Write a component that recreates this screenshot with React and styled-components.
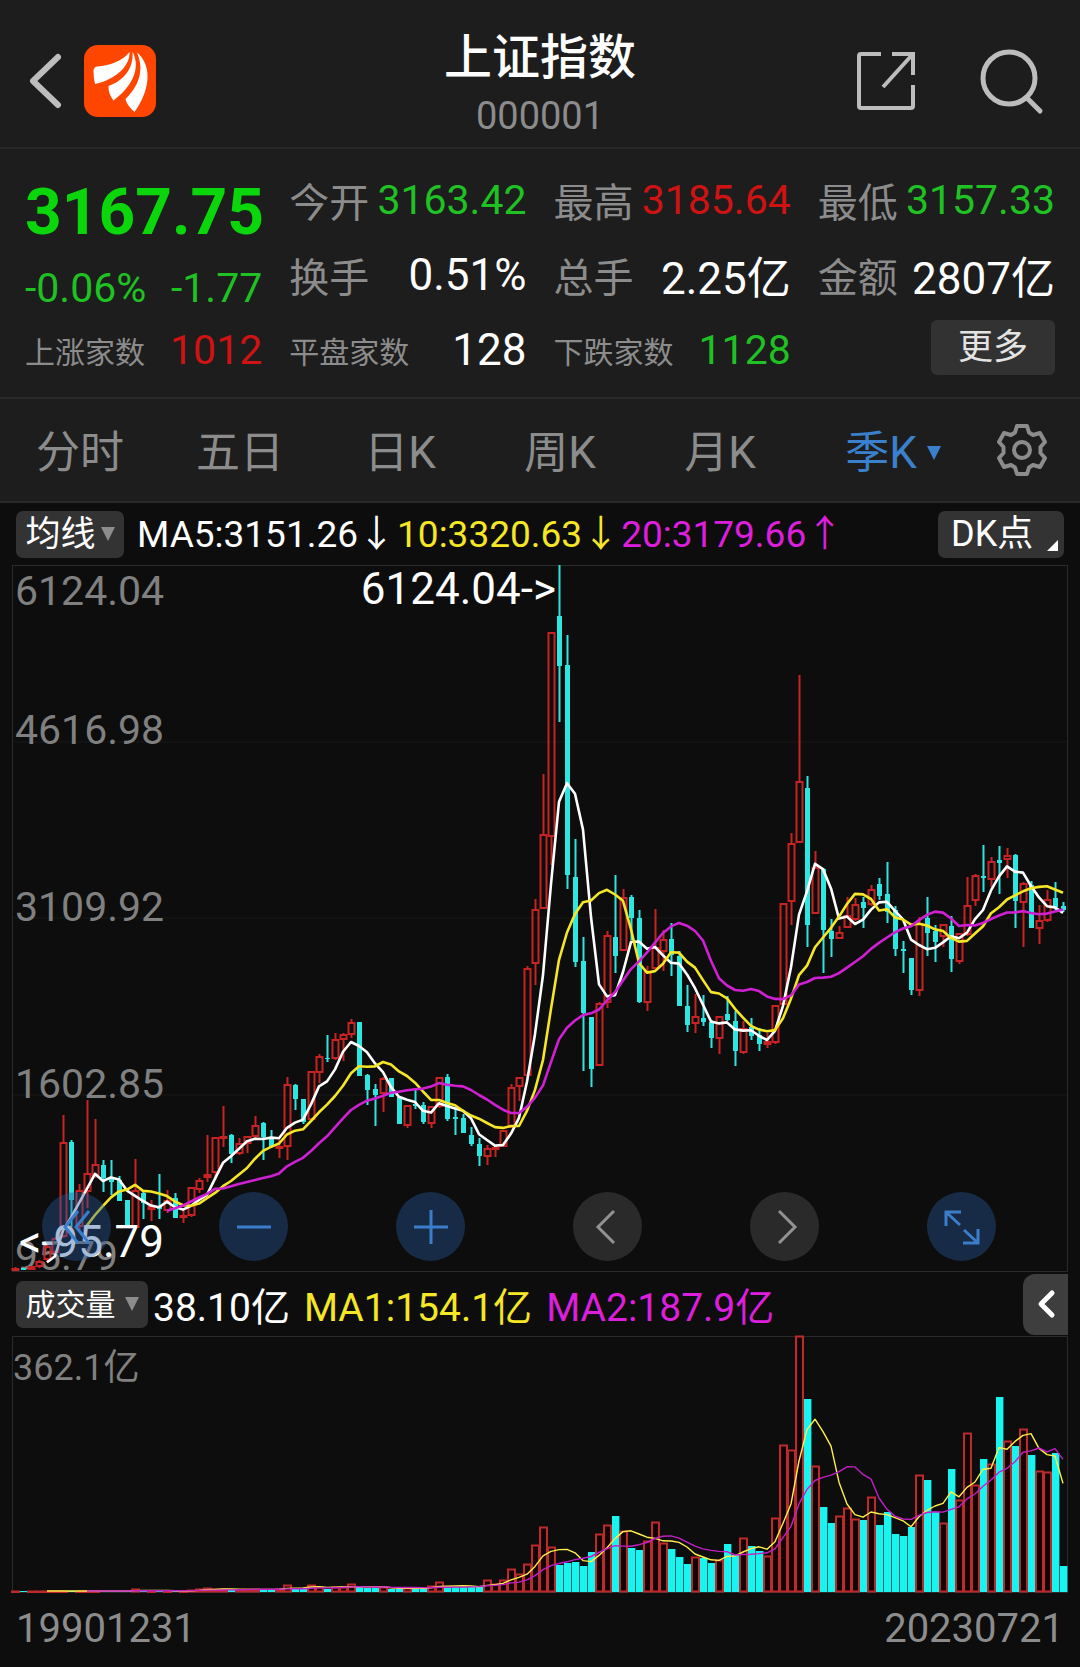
import React from 'react';
import styled, { createGlobalStyle } from 'styled-components';

const GlobalStyle = createGlobalStyle`
  * {
    box-sizing: border-box;
  }

  body {
    margin: 0;
    background: #0d0d0d;
    color: #ffffff;
    font-family: Roboto, 'Noto Sans CJK SC', sans-serif;
  }

  button {
    border: none;
    padding: 0;
    background: none;
    color: inherit;
    font: inherit;
    cursor: pointer;
  }
`;

const COLORS = {
  up: '#c82322',
  down: '#2ce6e2',
  volumeDown: '#18f4ef',
  green: '#1fc123',
  red: '#cf1313',
  white: '#ffffff',
  yellow: '#f5e626',
  magenta: '#dc1fdc',
  label: '#8c8c8c',
};

const Page = styled.main`
  background: #0d0d0d;
`;

const Header = styled.header`
  display: grid;
  grid-template-columns: 1fr auto 1fr;
  align-items: center;
  height: 149px;
  padding: 0 24px;
  background: #1d1d1d;
  border-bottom: 2px solid #292929;
`;

const HeaderSide = styled.div`
  display: flex;
  align-items: center;
  justify-content: ${props => props.$end ? 'flex-end' : 'flex-start'};
  gap: ${props => props.$end ? '63px' : '16px'};
  padding-top: 14px;
  padding-right: ${props => props.$end ? '10px' : '0'};
`;

const IconButton = styled.button`
  display: flex;
  color: #bdbdbd;
`;

const TitleBlock = styled.div`
  padding-top: 20px;
  text-align: center;
`;

const Title = styled.h1`
  margin: 0;
  font-size: 48px;
  font-weight: 500;
  line-height: 64px;
`;

const Code = styled.div`
  font-size: 38px;
  line-height: 52px;
  color: ${COLORS.label};
`;

const Quote = styled.section`
  display: grid;
  grid-template-columns: repeat(4, minmax(0, 1fr));
  column-gap: 27px;
  padding: 13px 25px 10px;
  background: #1d1d1d;
  border-bottom: 2px solid #292929;
`;

const QuoteColumn = styled.div`
  display: flex;
  flex-direction: column;
`;

const Price = styled.div`
  font-size: 64px;
  font-weight: 700;
  line-height: 102px;
  color: #0bd60b;
  white-space: nowrap;
`;

const Change = styled.div`
  display: flex;
  justify-content: space-between;
  font-size: 41px;
  line-height: 48px;
  color: ${COLORS.green};
`;

const StatRow = styled.dl`
  display: flex;
  align-items: center;
  justify-content: space-between;
  height: 75px;
  margin: 0;
  white-space: nowrap;
`;

const StatLabel = styled.dt`
  font-size: ${props => props.$small ? '30px' : '40px'};
  color: ${COLORS.label};
`;

const StatValue = styled.dd`
  margin: 0;
  font-size: ${props => props.$tight ? '41px' : '44px'};
  color: ${props => props.$color};
`;

const MoreButton = styled.button`
  align-self: flex-end;
  width: 124px;
  height: 55px;
  margin-top: 8px;
  border-radius: 6px;
  background: #323232;
  color: #e4e4e4;
  font-size: 35px;
  line-height: 55px;
`;

const Tabs = styled.nav`
  display: grid;
  grid-template-columns: repeat(5, 160fr) 186fr 94fr;
  align-items: center;
  height: 104px;
  background: #1d1d1d;
  border-bottom: 2px solid #292929;
`;

const Tab = styled.button`
  display: flex;
  align-items: center;
  justify-content: center;
  gap: 10px;
  padding-top: 6px;
  font-size: 44px;
  line-height: 64px;
  color: ${props => props.$active ? '#3a80cc' : COLORS.label};
`;

const GearButton = styled(IconButton)`
  padding-left: 8px;
  color: ${COLORS.label};
`;

const Caret = styled.span`
  border-left: 7px solid transparent;
  border-right: 7px solid transparent;
  border-top: 14px solid ${props => props.$color};
`;

const IndicatorRow = styled.div`
  display: flex;
  align-items: center;
  height: ${props => props.$height};
  padding: 0 12px 0 16px;
  white-space: nowrap;
`;

const IndicatorButton = styled.button`
  display: flex;
  align-items: center;
  justify-content: center;
  gap: ${props => props.$gap};
  width: ${props => props.$width};
  height: 47px;
  border-radius: 7px;
  background: #333333;
  font-size: ${props => props.$size};
  line-height: 47px;
`;

const CornerButton = styled(IndicatorButton)`
  position: relative;
  justify-content: flex-start;
  margin-left: auto;
  margin-right: 4px;
  padding-left: 13px;

  &::after {
    content: '';
    position: absolute;
    right: 6px;
    bottom: 7px;
    border-left: 11px solid transparent;
    border-bottom: 11px solid #ffffff;
  }
`;

const Legend = styled.div`
  display: flex;
  gap: ${props => props.$gap};
  margin-left: ${props => props.$left};
  font-size: ${props => props.$size};
`;

const LegendItem = styled.span`
  color: ${props => props.$color};
`;

const Arrow = styled.span`
  font-family: 'Noto Sans CJK SC', sans-serif;
  line-height: 1;
`;

const CollapseButton = styled.button`
  display: flex;
  align-items: center;
  justify-content: center;
  width: 45px;
  height: 61px;
  margin-left: auto;
  border-radius: 12px 0 0 12px;
  background: #3e3e3e;
`;

const ChartArea = styled.div`
  position: relative;
  margin: 0 12px;
`;

const ChartSvg = styled.svg`
  display: block;
  width: 100%;
  height: auto;
  overflow: visible;
`;

const ChartControls = styled.div`
  position: absolute;
  left: 30px;
  right: 72px;
  bottom: 11px;
  display: flex;
  justify-content: space-between;
`;

const RoundButton = styled.button`
  display: flex;
  align-items: center;
  justify-content: center;
  width: 69px;
  height: 69px;
  border-radius: 50%;
  background: ${props => props.$muted ? 'rgba(88, 88, 88, 0.4)' : 'rgba(40, 90, 158, 0.4)'};
  color: ${props => props.$muted ? '#929292' : '#3a7ecb'};
`;

const DateRow = styled.div`
  display: flex;
  justify-content: space-between;
  padding: 2px 16px 4px;
  font-size: 40px;
  line-height: 68px;
  color: ${COLORS.label};
`;

// One entry per quarter: [rising, high, body top, body bottom, low]
const candles = [
  [1, 1267, 1268, 1271, 1271], [0, 1268, 1268, 1270, 1270], [1, 1266, 1266, 1270, 1270],
  [1, 1260, 1261, 1267, 1268], [1, 1245, 1246, 1260, 1262], [1, 1237, 1238, 1253, 1255],
  [1, 1115, 1142, 1237, 1238], [0, 1140, 1142, 1200, 1227], [1, 1184, 1190, 1227, 1230],
  [1, 1100, 1173, 1192, 1208], [1, 1119, 1164, 1176, 1178], [0, 1160, 1165, 1178, 1192],
  [0, 1160, 1178, 1182, 1195], [0, 1176, 1180, 1201, 1201], [0, 1200, 1200, 1228, 1228],
  [1, 1159, 1190, 1228, 1228], [0, 1191, 1193, 1203, 1219], [1, 1200, 1206, 1210, 1221],
  [0, 1174, 1206, 1209, 1219], [1, 1190, 1200, 1211, 1213], [0, 1193, 1198, 1218, 1218],
  [1, 1210, 1215, 1217, 1223], [1, 1187, 1187, 1216, 1217], [1, 1178, 1180, 1190, 1193],
  [1, 1135, 1174, 1178, 1182], [1, 1137, 1137, 1173, 1180], [1, 1106, 1136, 1138, 1147],
  [0, 1134, 1135, 1154, 1163], [1, 1138, 1143, 1154, 1155], [1, 1136, 1136, 1144, 1153],
  [1, 1116, 1125, 1137, 1139], [0, 1122, 1123, 1137, 1160], [0, 1130, 1137, 1147, 1148],
  [1, 1140, 1146, 1149, 1158], [1, 1077, 1084, 1147, 1160], [0, 1084, 1085, 1099, 1110],
  [0, 1099, 1099, 1122, 1124], [1, 1071, 1071, 1120, 1121], [1, 1054, 1056, 1073, 1083],
  [0, 1035, 1058, 1059, 1062], [1, 1033, 1039, 1059, 1060], [1, 1033, 1034, 1040, 1061],
  [1, 1019, 1022, 1035, 1038], [0, 1022, 1022, 1076, 1076], [0, 1074, 1075, 1090, 1105],
  [0, 1084, 1089, 1095, 1126], [1, 1077, 1078, 1094, 1112], [0, 1078, 1078, 1097, 1097],
  [0, 1097, 1097, 1124, 1124], [1, 1105, 1105, 1126, 1128], [0, 1090, 1104, 1106, 1109],
  [0, 1102, 1105, 1122, 1124], [1, 1106, 1106, 1124, 1128], [1, 1077, 1077, 1107, 1108],
  [0, 1074, 1077, 1119, 1121], [0, 1107, 1117, 1119, 1135], [0, 1114, 1118, 1133, 1133],
  [0, 1127, 1135, 1144, 1146], [0, 1138, 1144, 1156, 1166], [1, 1145, 1148, 1157, 1165],
  [1, 1146, 1147, 1149, 1157], [1, 1130, 1130, 1147, 1147], [1, 1084, 1087, 1128, 1128],
  [1, 1077, 1077, 1087, 1101], [1, 966, 968, 1076, 1077], [1, 899, 909, 964, 985],
  [1, 774, 834, 909, 909], [1, 632, 632, 837, 865], [0, 565, 616, 666, 722],
  [0, 635, 665, 875, 889], [0, 839, 877, 962, 967], [0, 937, 961, 1013, 1071],
  [0, 1017, 1017, 1069, 1087], [1, 1002, 1003, 1066, 1066], [1, 931, 935, 1003, 1008],
  [0, 875, 937, 956, 973], [1, 889, 897, 951, 951], [0, 895, 897, 918, 940],
  [0, 910, 918, 1002, 1003], [1, 966, 971, 1003, 1011], [1, 909, 947, 969, 971],
  [1, 930, 939, 952, 971], [0, 923, 939, 955, 976], [0, 951, 956, 1006, 1006],
  [0, 985, 1006, 1025, 1032], [1, 994, 1016, 1024, 1033], [0, 995, 1018, 1022, 1026],
  [0, 1020, 1022, 1038, 1048], [1, 1016, 1016, 1039, 1054], [0, 996, 1014, 1020, 1021],
  [0, 1011, 1021, 1051, 1066], [1, 1021, 1028, 1053, 1054], [0, 1018, 1027, 1036, 1040],
  [0, 1028, 1035, 1044, 1051], [1, 1033, 1041, 1045, 1048], [1, 1005, 1005, 1043, 1044],
  [1, 903, 903, 1005, 1005], [1, 833, 843, 902, 925], [1, 675, 781, 843, 843],
  [0, 776, 788, 925, 947], [1, 851, 867, 914, 914], [0, 868, 869, 930, 973],
  [0, 919, 931, 939, 957], [1, 926, 932, 939, 939], [1, 897, 915, 928, 928],
  [1, 898, 904, 920, 921], [0, 897, 902, 908, 928], [1, 885, 889, 905, 906],
  [0, 878, 884, 896, 900], [0, 862, 894, 912, 923], [0, 906, 910, 949, 956],
  [0, 941, 949, 951, 973], [0, 958, 958, 990, 995], [1, 917, 923, 991, 996],
  [0, 897, 918, 933, 956], [0, 925, 931, 942, 962], [1, 924, 924, 937, 947],
  [0, 916, 926, 959, 972], [1, 933, 933, 962, 964], [1, 877, 905, 935, 936],
  [1, 874, 875, 901, 906], [0, 845, 876, 878, 892], [1, 857, 861, 880, 887],
  [0, 846, 860, 863, 894], [1, 848, 855, 860, 878], [0, 854, 855, 901, 928],
  [1, 882, 883, 903, 947], [0, 881, 885, 928, 928], [1, 905, 920, 929, 944],
  [1, 890, 899, 921, 922], [0, 882, 898, 907, 910], [0, 902, 906, 910, 912],
];

// Bar heights of the volume panel, one per quarter
const volumes = [
  1, 1, 1, 1, 1, 1, 1, 1, 1, 1, 1, 1,
  1, 1, 1, 3, 2, 1, 1, 1, 1, 1, 2, 3,
  4, 3, 3, 2, 2, 3, 3, 3, 2, 3, 7, 4,
  4, 7, 5, 3, 5, 5, 8, 5, 4, 4, 5, 3,
  3, 4, 4, 4, 6, 10, 5, 5, 5, 5, 6, 12,
  8, 12, 23, 18, 28, 47, 65, 45, 27, 29, 30, 26,
  40, 58, 67, 76, 61, 44, 42, 51, 70, 49, 43, 35,
  28, 35, 34, 29, 32, 48, 37, 54, 46, 41, 36, 74,
  147, 142, 256, 193, 126, 85, 69, 76, 84, 73, 72, 95,
  67, 80, 58, 56, 65, 117, 112, 80, 69, 123, 92, 159,
  107, 133, 128, 195, 151, 146, 163, 137, 121, 120, 139, 26,
];

const STEP = 8;
const columnX = i => 16 + i * STEP;
const closes = candles.map(([rising, , top, bottom]) => (rising ? top : bottom));

const averagePoints = (values, period) =>
  values
    .map((_, i) => {
      if (i < period - 1) return null;
      const sum = values.slice(i - period + 1, i + 1).reduce((a, b) => a + b, 0);
      return `${columnX(i) - 1},${(sum / period).toFixed(1)}`;
    })
    .filter(Boolean)
    .join(' ');

const VOLUME_BASE = 1592;
const volumeTops = volumes.map(v => VOLUME_BASE - v);

const stats = [
  [
    { label: '今开', value: '3163.42', color: COLORS.green, tight: true },
    { label: '换手', value: '0.51%', color: COLORS.white },
    { label: '平盘家数', value: '128', color: COLORS.white, small: true },
  ],
  [
    { label: '最高', value: '3185.64', color: COLORS.red, tight: true },
    { label: '总手', value: '2.25亿', color: COLORS.white },
    { label: '下跌家数', value: '1128', color: COLORS.green, small: true, tight: true },
  ],
  [
    { label: '最低', value: '3157.33', color: COLORS.green, tight: true },
    { label: '金额', value: '2807亿', color: COLORS.white },
  ],
];

const periods = ['分时', '五日', '日K', '周K', '月K'];

const axisLabels = [
  { text: '6124.04', y: 605 },
  { text: '4616.98', y: 744 },
  { text: '3109.92', y: 921 },
  { text: '1602.85', y: 1098 },
  { text: '95.79', y: 1270 },
];

const BackIcon = () => (
  <svg width="44" height="60" viewBox="0 0 44 60" fill="none" stroke="currentColor" strokeWidth="6">
    <path d="M34 6 9 30 34 54" strokeLinecap="round" strokeLinejoin="round" />
  </svg>
);

const Logo = () => (
  <svg width="72" height="72" viewBox="0 0 72 72">
    <rect width="72" height="72" rx="14" fill="#ff4600" />
    <g fill="#ffffff">
      <path d="M9.5 26 Q9.500 22 13 21.500 C27 20.500 39 15.500 45.500 7 C46.500 19 34 34 11 39 Q9.500 33 9.500 26Z" />
      <path d="M24.500 41 C39 36 50 24 48.500 6.500 C58 25 46 43 29.500 55.500 Q24 48.500 24.500 41Z" />
      <path d="M53 7.500 C66 18 69 41 50.500 67 Q42.500 60 41.500 54 C54 42 61 26 53 7.500Z" />
    </g>
  </svg>
);

const ShareIcon = () => (
  <svg width="58" height="60" viewBox="0 0 58 60" fill="none" stroke="currentColor" strokeWidth="4">
    <path d="M24 3H4Q2 3 2 5V55Q2 57 4 57H54Q56 57 56 55V34" />
    <path d="M35 3H56V24M55 4 26 36" />
  </svg>
);

const SearchIcon = () => (
  <svg width="68" height="68" viewBox="0 0 68 68" fill="none" stroke="currentColor" strokeWidth="5">
    <circle cx="31" cy="31" r="26" />
    <path d="M49 51 62 64" strokeLinecap="round" />
  </svg>
);

const GearIcon = () => (
  <svg width="56" height="56" viewBox="-28 -28 56 56" fill="none" stroke="currentColor" strokeWidth="4" strokeLinejoin="round">
    <path d="M-5 -24H5L7 -17.500 11 -15 18 -17 23 -8 18.500 -3V3L23 8 18 17 11 15 7 17.500 5 24H-5L-7 17.500 -11 15 -18 17 -23 8 -18.500 3V-3L-23 -8 -18 -17 -11 -15 -7 -17.500Z" />
    <circle r="8" />
  </svg>
);

const ControlIcon = ({ d, width = 3 }) => (
  <svg width="40" height="40" viewBox="0 0 40 40" fill="none" stroke="currentColor" strokeWidth={width}>
    <path d={d} />
  </svg>
);

const controls = [
  { label: '最左', d: 'M21 4 8 20 21 36M32 4 19 20 32 36' },
  { label: '缩小', d: 'M3 20H37' },
  { label: '放大', d: 'M3 20H37M20 3V37' },
  { label: '左移', d: 'M26 4 10 20 26 36', muted: true },
  { label: '右移', d: 'M14 4 30 20 14 36', muted: true },
  { label: '全屏', d: 'M4 19V5H19M5 6 18 18M36 22V36H21M35 35 22 23' },
];

const PriceChart = () => (
  <ChartSvg viewBox="12 565 1056 707" role="img" aria-label="上证指数 季K">
    <rect x="12.5" y="565.5" width="1055" height="706" fill="none" stroke="#2a2a2a" />
    <path d="M13 742H1067M13 918H1067M13 1095H1067" stroke="#191919" />
    <g fill="#808080" fontSize="41">
      {axisLabels.map(({ text, y }) => (
        <text key={text} x="15" y={y}>{text}</text>
      ))}
    </g>
    {candles.map(([rising, high, top, bottom, low], i) => {
      const x = columnX(i);
      return rising ? (
        <g key={i} stroke={COLORS.up} strokeWidth="2" fill="none">
          <path d={`M${x - 0.5} ${high}V${top}M${x - 0.5} ${bottom}V${low}`} />
          <rect x={x - 3.5} y={top + 1} width="6" height={Math.max(bottom - top - 2, 1)} />
        </g>
      ) : (
        <g key={i} fill={COLORS.down}>
          <rect x={x - 1.5} y={high} width="2" height={low - high} />
          <rect x={x - 3} y={top} width="5" height={Math.max(bottom - top, 1)} />
        </g>
      );
    })}
    <g fill="none" strokeWidth="2.6" strokeLinejoin="round">
      <polyline points={averagePoints(closes, 5)} stroke={COLORS.white} />
      <polyline points={averagePoints(closes, 10)} stroke={COLORS.yellow} />
      <polyline points={averagePoints(closes, 20)} stroke="#cf20d4" />
    </g>
    <g fill="#ffffff" fontSize="44">
      <text x="556" y="604" textAnchor="end">{'6124.04->'}</text>
      <text x="19" y="1257">{'<-95.79'}</text>
    </g>
  </ChartSvg>
);

const VolumeChart = () => (
  <ChartSvg viewBox="12 1336 1056 257" role="img" aria-label="成交量">
    <rect x="12.5" y="1336.5" width="1055" height="256" fill="none" stroke="#2a2a2a" />
    <text x="13" y="1380" fill="#808080" fontSize="36">362.1亿</text>
    {volumeTops.map((y, i) => {
      const x = columnX(i);
      return candles[i][0] ? (
        <rect
          key={i}
          x={x - 4}
          y={y + 0.5}
          width="7"
          height={Math.max(VOLUME_BASE - y - 1, 0.5)}
          fill="#120405"
          stroke="#bc2a2c"
          strokeWidth="2"
        />
      ) : (
        <rect key={i} x={x - 4} y={y} width="7.4" height={VOLUME_BASE - y} fill={COLORS.volumeDown} />
      );
    })}
    <g fill="none" strokeWidth="1.4" strokeLinejoin="round">
      <polyline points={averagePoints(volumeTops, 5)} stroke="#fff04a" />
      <polyline points={averagePoints(volumeTops, 10)} stroke="#c31fc9" />
    </g>
  </ChartSvg>
);

const App = () => {
  return (
    <>
      <GlobalStyle />
      <Page>
        <Header>
          <HeaderSide>
            <IconButton aria-label="返回"><BackIcon /></IconButton>
            <Logo />
          </HeaderSide>
          <TitleBlock>
            <Title>上证指数</Title>
            <Code>000001</Code>
          </TitleBlock>
          <HeaderSide $end>
            <IconButton aria-label="分享"><ShareIcon /></IconButton>
            <IconButton aria-label="搜索"><SearchIcon /></IconButton>
          </HeaderSide>
        </Header>

        <Quote>
          <QuoteColumn>
            <Price>3167.75</Price>
            <Change>
              <span>-0.06%</span>
              <span>-1.77</span>
            </Change>
            <StatRow>
              <StatLabel $small>上涨家数</StatLabel>
              <StatValue $color={COLORS.red} $tight>1012</StatValue>
            </StatRow>
          </QuoteColumn>
          {stats.map((column, index) => (
            <QuoteColumn key={index}>
              {column.map(item => (
                <StatRow key={item.label}>
                  <StatLabel $small={item.small}>{item.label}</StatLabel>
                  <StatValue $color={item.color} $tight={item.tight}>{item.value}</StatValue>
                </StatRow>
              ))}
              {index === 2 && <MoreButton>更多</MoreButton>}
            </QuoteColumn>
          ))}
        </Quote>

        <Tabs>
          {periods.map(name => (
            <Tab key={name}>{name}</Tab>
          ))}
          <Tab $active aria-haspopup="menu">
            季K
            <Caret $color="#3a80cc" />
          </Tab>
          <GearButton aria-label="设置"><GearIcon /></GearButton>
        </Tabs>

        <IndicatorRow $height="62px">
          <IndicatorButton $width="108px" $size="35px" $gap="5px" aria-haspopup="menu">
            均线
            <Caret $color="#8c8c8c" />
          </IndicatorButton>
          <Legend $left="13px" $gap="2px" $size="37px">
            <LegendItem $color={COLORS.white}>MA5:3151.26<Arrow>↓</Arrow></LegendItem>
            <LegendItem $color={COLORS.yellow}>10:3320.63<Arrow>↓</Arrow></LegendItem>
            <LegendItem $color={COLORS.magenta}>20:3179.66<Arrow>↑</Arrow></LegendItem>
          </Legend>
          <CornerButton $width="126px" $size="36px" aria-haspopup="menu">DK点</CornerButton>
        </IndicatorRow>

        <ChartArea>
          <PriceChart />
          <ChartControls>
            {controls.map(({ label, d, muted }) => (
              <RoundButton key={label} $muted={muted} aria-label={label}>
                <ControlIcon d={d} />
              </RoundButton>
            ))}
          </ChartControls>
        </ChartArea>

        <IndicatorRow $height="64px">
          <IndicatorButton $width="132px" $size="30px" $gap="9px" aria-haspopup="menu">
            成交量
            <Caret $color="#8c8c8c" />
          </IndicatorButton>
          <Legend $left="5px" $gap="14px" $size="39px">
            <LegendItem $color={COLORS.white}>38.10亿</LegendItem>
            <LegendItem $color={COLORS.yellow}>MA1:154.1亿</LegendItem>
            <LegendItem $color={COLORS.magenta}>MA2:187.9亿</LegendItem>
          </Legend>
          <CollapseButton aria-label="展开">
            <svg width="20" height="32" viewBox="0 0 20 32" fill="none" stroke="#ffffff" strokeWidth="5">
              <path d="M16 5 5 16 16 27" strokeLinecap="round" strokeLinejoin="round" />
            </svg>
          </CollapseButton>
        </IndicatorRow>

        <ChartArea>
          <VolumeChart />
        </ChartArea>

        <DateRow>
          <span>19901231</span>
          <span>20230721</span>
        </DateRow>
      </Page>
    </>
  );
};

export default App;
